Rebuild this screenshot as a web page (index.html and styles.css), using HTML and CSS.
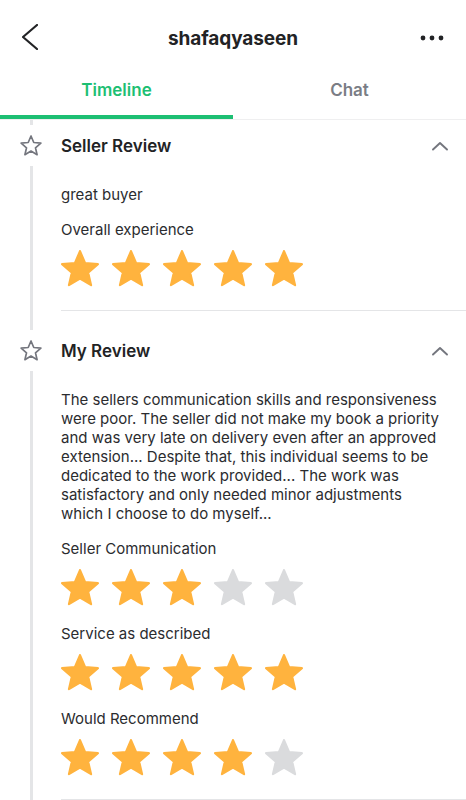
FILE: index.html
```html
<!DOCTYPE html>
<html lang="en">
<head>
<meta charset="utf-8">
<title>shafaqyaseen</title>
<link rel="stylesheet" href="styles.css">
</head>
<body>
<div class="app">
  <header class="topbar">
    <button class="icon-btn back" aria-label="Back">
      <svg width="16" height="26" viewBox="0 0 16 26"><polyline points="15,1 1,13 15,25" fill="none" stroke="#222325" stroke-width="2.2" stroke-linecap="round" stroke-linejoin="round"/></svg>
    </button>
    <h1 class="title">shafaqyaseen</h1>
    <button class="icon-btn more" aria-label="More">
      <svg width="24" height="6" viewBox="0 0 24 6"><circle cx="3" cy="3" r="2.4" fill="#222325"/><circle cx="12" cy="3" r="2.4" fill="#222325"/><circle cx="21" cy="3" r="2.4" fill="#222325"/></svg>
    </button>
  </header>

  <nav class="tabs">
    <div class="tab active">Timeline</div>
    <div class="tab">Chat</div>
  </nav>

  <section class="entry">
    <div class="rail">
      <span class="rail-line top"></span>
      <svg class="rail-star" width="22" height="21" viewBox="1 1 22 21.3"><path d="M12 17.27L18.18 21l-1.64-7.03L22 9.24l-7.19-.61L12 2 9.19 8.63 2 9.24l5.46 4.73L5.82 21z" fill="none" stroke="#74767e" stroke-width="1.7" stroke-linejoin="round"/></svg>
      <span class="rail-line fill"></span>
    </div>
    <div class="entry-main">
      <div class="entry-head">
        <h2 class="entry-title">Seller Review</h2>
        <svg class="chevron" width="18" height="10" viewBox="0 0 18 10"><polyline points="2,8.5 9,2 16,8.5" fill="none" stroke="#74767e" stroke-width="1.9" stroke-linecap="round" stroke-linejoin="round"/></svg>
      </div>
      <div class="entry-body">
        <p class="comment">great buyer</p>
        <div class="rating">
          <div class="rating-label">Overall experience</div>
          <div class="stars">
            <svg class="star on" viewBox="1.4 1.4 21.2 20.6"><path d="M12 17.27L18.18 21l-1.64-7.03L22 9.24l-7.19-.61L12 2 9.19 8.63 2 9.24l5.46 4.73L5.82 21z"/></svg>
            <svg class="star on" viewBox="1.4 1.4 21.2 20.6"><path d="M12 17.27L18.18 21l-1.64-7.03L22 9.24l-7.19-.61L12 2 9.19 8.63 2 9.24l5.46 4.73L5.82 21z"/></svg>
            <svg class="star on" viewBox="1.4 1.4 21.2 20.6"><path d="M12 17.27L18.18 21l-1.64-7.03L22 9.24l-7.19-.61L12 2 9.19 8.63 2 9.24l5.46 4.73L5.82 21z"/></svg>
            <svg class="star on" viewBox="1.4 1.4 21.2 20.6"><path d="M12 17.27L18.18 21l-1.64-7.03L22 9.24l-7.19-.61L12 2 9.19 8.63 2 9.24l5.46 4.73L5.82 21z"/></svg>
            <svg class="star on" viewBox="1.4 1.4 21.2 20.6"><path d="M12 17.27L18.18 21l-1.64-7.03L22 9.24l-7.19-.61L12 2 9.19 8.63 2 9.24l5.46 4.73L5.82 21z"/></svg>
          </div>
        </div>
      </div>
    </div>
  </section>

  <section class="entry">
    <div class="rail">
      <span class="rail-line top"></span>
      <svg class="rail-star" width="22" height="21" viewBox="1 1 22 21.3"><path d="M12 17.27L18.18 21l-1.64-7.03L22 9.24l-7.19-.61L12 2 9.19 8.63 2 9.24l5.46 4.73L5.82 21z" fill="none" stroke="#74767e" stroke-width="1.7" stroke-linejoin="round"/></svg>
      <span class="rail-line fill"></span>
    </div>
    <div class="entry-main">
      <div class="entry-head">
        <h2 class="entry-title">My Review</h2>
        <svg class="chevron" width="18" height="10" viewBox="0 0 18 10"><polyline points="2,8.5 9,2 16,8.5" fill="none" stroke="#74767e" stroke-width="1.9" stroke-linecap="round" stroke-linejoin="round"/></svg>
      </div>
      <div class="entry-body">
        <p class="comment">The sellers communication skills and responsiveness were poor. The seller did not make my book a priority and was very late on delivery even after an approved extension... Despite that, this individual seems to be dedicated to the work provided... The work was satisfactory and only needed minor adjustments which I choose to do myself...</p>
        <div class="rating">
          <div class="rating-label">Seller Communication</div>
          <div class="stars">
            <svg class="star on" viewBox="1.4 1.4 21.2 20.6"><path d="M12 17.27L18.18 21l-1.64-7.03L22 9.24l-7.19-.61L12 2 9.19 8.63 2 9.24l5.46 4.73L5.82 21z"/></svg>
            <svg class="star on" viewBox="1.4 1.4 21.2 20.6"><path d="M12 17.27L18.18 21l-1.64-7.03L22 9.24l-7.19-.61L12 2 9.19 8.63 2 9.24l5.46 4.73L5.82 21z"/></svg>
            <svg class="star on" viewBox="1.4 1.4 21.2 20.6"><path d="M12 17.27L18.18 21l-1.64-7.03L22 9.24l-7.19-.61L12 2 9.19 8.63 2 9.24l5.46 4.73L5.82 21z"/></svg>
            <svg class="star off" viewBox="1.4 1.4 21.2 20.6"><path d="M12 17.27L18.18 21l-1.64-7.03L22 9.24l-7.19-.61L12 2 9.19 8.63 2 9.24l5.46 4.73L5.82 21z"/></svg>
            <svg class="star off" viewBox="1.4 1.4 21.2 20.6"><path d="M12 17.27L18.18 21l-1.64-7.03L22 9.24l-7.19-.61L12 2 9.19 8.63 2 9.24l5.46 4.73L5.82 21z"/></svg>
          </div>
        </div>
        <div class="rating">
          <div class="rating-label">Service as described</div>
          <div class="stars">
            <svg class="star on" viewBox="1.4 1.4 21.2 20.6"><path d="M12 17.27L18.18 21l-1.64-7.03L22 9.24l-7.19-.61L12 2 9.19 8.63 2 9.24l5.46 4.73L5.82 21z"/></svg>
            <svg class="star on" viewBox="1.4 1.4 21.2 20.6"><path d="M12 17.27L18.18 21l-1.64-7.03L22 9.24l-7.19-.61L12 2 9.19 8.63 2 9.24l5.46 4.73L5.82 21z"/></svg>
            <svg class="star on" viewBox="1.4 1.4 21.2 20.6"><path d="M12 17.27L18.18 21l-1.64-7.03L22 9.24l-7.19-.61L12 2 9.19 8.63 2 9.24l5.46 4.73L5.82 21z"/></svg>
            <svg class="star on" viewBox="1.4 1.4 21.2 20.6"><path d="M12 17.27L18.18 21l-1.64-7.03L22 9.24l-7.19-.61L12 2 9.19 8.63 2 9.24l5.46 4.73L5.82 21z"/></svg>
            <svg class="star on" viewBox="1.4 1.4 21.2 20.6"><path d="M12 17.27L18.18 21l-1.64-7.03L22 9.24l-7.19-.61L12 2 9.19 8.63 2 9.24l5.46 4.73L5.82 21z"/></svg>
          </div>
        </div>
        <div class="rating">
          <div class="rating-label">Would Recommend</div>
          <div class="stars">
            <svg class="star on" viewBox="1.4 1.4 21.2 20.6"><path d="M12 17.27L18.18 21l-1.64-7.03L22 9.24l-7.19-.61L12 2 9.19 8.63 2 9.24l5.46 4.73L5.82 21z"/></svg>
            <svg class="star on" viewBox="1.4 1.4 21.2 20.6"><path d="M12 17.27L18.18 21l-1.64-7.03L22 9.24l-7.19-.61L12 2 9.19 8.63 2 9.24l5.46 4.73L5.82 21z"/></svg>
            <svg class="star on" viewBox="1.4 1.4 21.2 20.6"><path d="M12 17.27L18.18 21l-1.64-7.03L22 9.24l-7.19-.61L12 2 9.19 8.63 2 9.24l5.46 4.73L5.82 21z"/></svg>
            <svg class="star on" viewBox="1.4 1.4 21.2 20.6"><path d="M12 17.27L18.18 21l-1.64-7.03L22 9.24l-7.19-.61L12 2 9.19 8.63 2 9.24l5.46 4.73L5.82 21z"/></svg>
            <svg class="star off" viewBox="1.4 1.4 21.2 20.6"><path d="M12 17.27L18.18 21l-1.64-7.03L22 9.24l-7.19-.61L12 2 9.19 8.63 2 9.24l5.46 4.73L5.82 21z"/></svg>
          </div>
        </div>
      </div>
    </div>
  </section>
</div>
</body>
</html>
```

FILE: styles.css
```css
* { box-sizing: border-box; }
html, body { margin: 0; padding: 0; background: #ffffff; }
body {
  font-family: Inter, "Noto Sans", "Liberation Sans", sans-serif;
  color: #222325;
  width: 466px;
  overflow: hidden;
}
.app { width: 466px; }

.topbar {
  display: grid;
  grid-template-columns: 1fr auto 1fr;
  align-items: center;
  height: 78px;
  padding: 0 22px;
}
.icon-btn {
  background: none;
  border: 0;
  padding: 0;
  margin: 0;
  display: flex;
  align-items: center;
}
.back { justify-self: start; margin-top: -4px; }
.more { justify-self: end; margin-top: -2px; }
.title {
  margin: 0;
  font-size: 19px;
  font-weight: 700;
  line-height: 24px;
  color: #222325;
  letter-spacing: -0.1px;
}

.tabs {
  display: flex;
  border-bottom: 1px solid #efeff0;
}
.tab {
  flex: 1;
  text-align: center;
  font-size: 17px;
  font-weight: 600;
  line-height: 24px;
  padding-bottom: 13px;
  border-bottom: 4px solid transparent;
  color: #7a7d85;
}
.tab.active {
  color: #1dbf73;
  border-bottom-color: #1dbf73;
}

.entry { display: flex; }
.rail {
  width: 61px;
  flex: none;
  display: flex;
  flex-direction: column;
  align-items: center;
  padding-left: 1px;
}
.rail-line {
  width: 3px;
  background: #e4e5e7;
  display: block;
}
.rail-line.top { height: 5px; margin-bottom: 10px; }
.rail-star { display: block; flex: none; }
.rail-line.fill { flex: 1; margin-top: 10px; }

.entry-main {
  flex: 1;
  min-width: 0;
  padding-bottom: 14px;
}
.entry-head {
  height: 52px;
  display: flex;
  align-items: center;
  justify-content: space-between;
  padding-right: 17px;
}
.entry-title {
  margin: 0;
  font-size: 17px;
  font-weight: 600;
  line-height: 24px;
  color: #222325;
}
.chevron { display: block; }

.entry-body {
  padding: 13px 22px 23px 0;
  border-bottom: 1px solid #e4e5e7;
}
.comment {
  margin: 0 0 16px;
  font-size: 15px;
  line-height: 19px;
  color: #2b2c2f;
}
.rating + .rating { margin-top: 18px; }
.rating-label {
  font-size: 15px;
  line-height: 19px;
  margin-bottom: 12px;
  color: #2b2c2f;
}
.stars {
  display: flex;
  gap: 13px;
  height: 36px;
}
.star {
  width: 38px;
  height: 37px;
  display: block;
  margin-top: -1px;
}
.star path { stroke-width: 1.2; stroke-linejoin: round; }
.star.on path { fill: #ffb33e; stroke: #ffb33e; }
.star.off path { fill: #dadbdd; stroke: #dadbdd; }
```
